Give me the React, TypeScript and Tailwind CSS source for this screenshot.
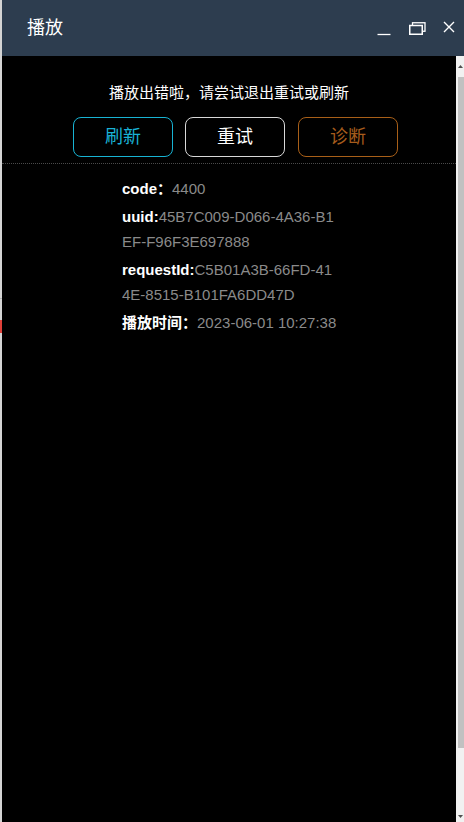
import { useState } from 'react';

const info = [
    { label: 'code：', value: '4400' },
    { label: 'uuid:', value: '45B7C009-D066-4A36-B1EF-F96F3E697888' },
    { label: 'requestId:', value: 'C5B01A3B-66FD-414E-8515-B101FA6DD47D' },
    { label: '播放时间：', value: '2023-06-01 10:27:38' },
];

function WindowControls() {
    return (
        <div className="flex items-center">
            {/* minimize */}
            <svg width="14" height="14" viewBox="0 0 14 14" className="mt-[5px]">
                <line x1="0.5" y1="10.5" x2="13.5" y2="10.5" stroke="#fff" strokeWidth="1.3" />
            </svg>
            {/* restore */}
            <svg width="17" height="13" viewBox="0 0 17 13" className="ml-[18px]">
                <rect x="3.5" y="0.75" width="12.5" height="8.5" fill="none" stroke="#fff" strokeWidth="1.3" />
                <rect x="0.75" y="3.5" width="12.5" height="8.75" fill="#2d3d4f" stroke="#fff" strokeWidth="1.5" />
            </svg>
            {/* close */}
            <svg width="12" height="12" viewBox="0 0 12 12" className="ml-[17px] mb-[2px]">
                <path d="M1 1 L11 11 M11 1 L1 11" stroke="#fff" strokeWidth="1.4" />
            </svg>
        </div>
    );
}

export default function App() {
    const [retries, setRetries] = useState(0);

    return (
        <div
            className="flex h-[822px] w-[464px] overflow-hidden bg-[#d4d4d4]"
            style={{ fontFamily: '"Liberation Sans", Arial, "Noto Sans CJK SC", sans-serif' }}
        >
            {/* page edge behind the window */}
            <div className="relative w-[2px] shrink-0">
                <div className="absolute left-0 top-[298px] h-px w-[2px] bg-[#b0b0b0]" />
                <div className="absolute left-0 top-[320px] h-[13px] w-[2px] bg-[#e0413a]" />
            </div>

            <div className="flex min-w-0 flex-1 flex-col">
                {/* Title bar */}
                <div className="flex h-[56px] shrink-0 items-center justify-between bg-[#2d3d4f] pl-[25px] pr-[9px]">
                    <span className="text-[18px] leading-none text-white">播放</span>
                    <WindowControls />
                </div>

                <div className="flex min-h-0 flex-1">
                    {/* Player body */}
                    <div className="flex-1 bg-black">
                        <p className="pt-[27px] text-center text-[15px] leading-[20px] text-white">
                            播放出错啦，请尝试退出重试或刷新
                        </p>

                        <div className="mt-[14px] flex gap-3 pl-[71px]">
                            <button className="h-[40px] w-[100px] rounded-[8px] border border-[#18b3d3] text-[18px] text-[#19b2d6]">
                                刷新
                            </button>
                            <button
                                onClick={() => setRetries(retries + 1)}
                                className="h-[40px] w-[100px] rounded-[8px] border border-[#d8d8d8] text-[18px] text-white"
                            >
                                重试
                            </button>
                            <button className="ml-px h-[40px] w-[100px] rounded-[8px] border border-[#a85f18] text-[18px] text-[#a65c1c]">
                                诊断
                            </button>
                        </div>

                        <div className="mt-[6px] border-t border-dotted border-[#4a4a4a]" />

                        <div className="ml-[120px] flex w-[216px] flex-col gap-[3px] pt-[12px] text-[15px] leading-[25px] break-all">
                            {info.map((row) => (
                                <p key={row.label}>
                                    <span className="font-bold text-white">{row.label}</span>
                                    <span className="text-[#8a8a8a]">{row.value}</span>
                                </p>
                            ))}
                        </div>
                    </div>

                    {/* Scrollbar */}
                    <div className="flex w-2 shrink-0 flex-col bg-[#f1f1f1]">
                        <div className="flex h-[21px] items-center justify-end pr-px">
                            <svg width="5" height="3" viewBox="0 0 5 3">
                                <path d="M0 3 L2.5 0 L5 3 Z" fill="#505050" />
                            </svg>
                        </div>
                        <div className="ml-[2px] h-[671px] bg-[#c1c1c1]" />
                        <div className="flex flex-1 items-end justify-end pb-[4px] pr-px">
                            <svg width="5" height="3" viewBox="0 0 5 3">
                                <path d="M0 0 L5 0 L2.5 3 Z" fill="#505050" />
                            </svg>
                        </div>
                    </div>
                </div>
            </div>
        </div>
    );
}
